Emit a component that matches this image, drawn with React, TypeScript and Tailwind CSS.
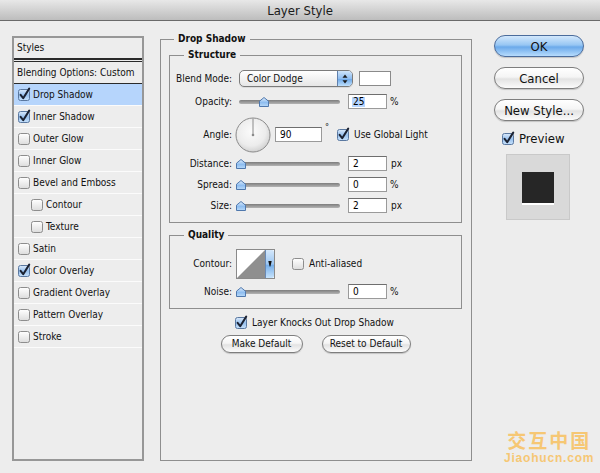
import React from "react";

const FONT = "'DejaVu Sans Condensed', 'Liberation Sans', sans-serif";

function Check({ checked }: { checked?: boolean }) {
  return (
    <svg width="13" height="13" viewBox="0 0 13 13" className="shrink-0 overflow-visible">
      <rect
        x="0.5"
        y="1.5"
        width="11"
        height="11"
        rx="2"
        fill={checked ? "url(#cbBlue)" : "url(#cbGray)"}
        stroke={checked ? "#5a78a0" : "#8d8d8d"}
      />
      {checked && (
        <path d="M2.6 6.8 L5.2 10.2 L11.2 0.6" stroke="#1b2232" strokeWidth="2" fill="none" strokeLinecap="round" strokeLinejoin="round" />
      )}
    </svg>
  );
}

function Thumb() {
  return (
    <svg width="10" height="10" viewBox="0 0 10 10">
      <path d="M5 0.5 L9.5 4.2 L9.5 9.5 L0.5 9.5 L0.5 4.2 Z" fill="url(#thumbG)" stroke="#4f78ad" strokeWidth="1" />
    </svg>
  );
}

function Slider({ mid }: { mid?: boolean }) {
  return (
    <div className="relative h-[10px] w-[101px] shrink-0">
      <div className="absolute left-0 right-0 top-[3px] h-[4px] rounded-full bg-gradient-to-b from-[#7d7d7d] to-[#b4b4b4]" />
      <div className={mid ? "absolute left-[20px] top-0 leading-none" : "absolute left-[-3px] top-0 leading-none"}>
        <Thumb />
      </div>
    </div>
  );
}

function Field({ value, wide, selected }: { value: string; wide?: boolean; selected?: boolean }) {
  return (
    <div
      className={
        (wide ? "w-[47px] " : "w-[39px] ") +
        "flex h-[15px] shrink-0 items-center border border-[#9a9a9a] border-t-[#6e6e6e] bg-white pl-[3px] text-[10px] leading-none text-black"
      }
    >
      <span className={selected ? "bg-[#b5d5ff] px-[1px]" : "px-[1px]"}>{value}</span>
    </div>
  );
}

function SliderRow({ label, value, unit, mid, selected }: { label: string; value: string; unit: string; mid?: boolean; selected?: boolean }) {
  return (
    <div className="flex h-[15px] items-center">
      <div className="mr-[7px] w-[62px] text-right">{label}</div>
      <Slider mid={mid} />
      <div className="ml-[8px]">
        <Field value={value} selected={selected} />
      </div>
      <div className={unit === "px" ? "ml-[4px]" : "ml-[3px]"}>{unit}</div>
    </div>
  );
}

function ListRow({ label, checked, active, indent }: { label: string; checked?: boolean; active?: boolean; indent?: boolean }) {
  return (
    <div
      className={
        (active ? "bg-[#b6d5fc] " : "") +
        "flex h-[22px] items-center border-b border-[#fbfbfb] " +
        (indent ? "pl-[17px]" : "pl-[4px]")
      }
    >
      <Check checked={checked} />
      <span className="ml-[2px]">{label}</span>
    </div>
  );
}

function AquaButton({ label, primary, className }: { label: string; primary?: boolean; className: string }) {
  return (
    <div
      className={
        className +
        " flex items-center justify-center rounded-full border shadow-[0_1px_1px_rgba(0,0,0,0.18)] " +
        (primary
          ? "border-[#4b6c9c] bg-[linear-gradient(to_bottom,#d3e8fc_0%,#97c6f3_45%,#6ba9ea_55%,#b7dcfd_100%)]"
          : "border-[#7e7e7e] bg-[linear-gradient(to_bottom,#ffffff_0%,#f5f5f5_45%,#e3e3e3_55%,#fbfbfb_100%)]")
      }
    >
      {label}
    </div>
  );
}

export default function App() {
  return (
    <div
      className="relative h-[473px] w-[600px] overflow-hidden bg-[#ededed] text-[10px] leading-none text-[#111]"
      style={{ fontFamily: FONT }}
    >
      <svg width="0" height="0" className="absolute">
        <defs>
          <linearGradient id="cbBlue" x1="0" y1="0" x2="0" y2="1">
            <stop offset="0" stopColor="#dbeafb" />
            <stop offset="0.5" stopColor="#98c1ee" />
            <stop offset="1" stopColor="#c7e1fb" />
          </linearGradient>
          <linearGradient id="cbGray" x1="0" y1="0" x2="0" y2="1">
            <stop offset="0" stopColor="#ffffff" />
            <stop offset="0.5" stopColor="#eeeeee" />
            <stop offset="1" stopColor="#dcdcdc" />
          </linearGradient>
          <linearGradient id="thumbG" x1="0" y1="0" x2="0" y2="1">
            <stop offset="0" stopColor="#e3effc" />
            <stop offset="0.55" stopColor="#8ebdf0" />
            <stop offset="1" stopColor="#b9daf9" />
          </linearGradient>
          <radialGradient id="dialG" cx="0.45" cy="0.4" r="0.6">
            <stop offset="0" stopColor="#fbfbfb" />
            <stop offset="0.7" stopColor="#ececec" />
            <stop offset="1" stopColor="#d2d2d2" />
          </radialGradient>
        </defs>
      </svg>

      {/* Title bar */}
      <div className="flex h-[21px] items-center justify-center border-b border-[#6a6a6a] bg-gradient-to-b from-[#e8e8e8] to-[#bdbdbd] text-[13px] text-[#1a1a1a]">
        Layer Style
      </div>

      {/* Body */}
      <div className="flex pl-[12px] pt-[14px]">
        {/* Left list */}
        <div className="mt-[1px] h-[425px] w-[132px] shrink-0 border-2 border-[#979797] bg-[#ededed]">
          <div className="flex h-[20px] items-center pl-[3px]">Styles</div>
          <div className="h-[2px] bg-[#2a2a2a]" />
          <div className="h-[1px]" />
          <div className="h-[1px] bg-[#2a2a2a]" />
          <div className="flex h-[22px] items-center border-b border-[#2a2a2a] pl-[3px]">Blending Options: Custom</div>
          <ListRow label="Drop Shadow" checked active />
          <ListRow label="Inner Shadow" checked />
          <ListRow label="Outer Glow" />
          <ListRow label="Inner Glow" />
          <ListRow label="Bevel and Emboss" />
          <ListRow label="Contour" indent />
          <ListRow label="Texture" indent />
          <ListRow label="Satin" />
          <ListRow label="Color Overlay" checked />
          <ListRow label="Gradient Overlay" />
          <ListRow label="Pattern Overlay" />
          <ListRow label="Stroke" />
        </div>

        {/* Middle: Drop Shadow group */}
        <div className="relative ml-[16px] mt-[4px] h-[422px] w-[312px] shrink-0 border border-[#8e8e8e] pl-[8px] pr-[9px]">
          <div className="absolute left-[13px] top-[-6px] bg-[#ededed] px-[4px] font-bold">Drop Shadow</div>

          {/* Structure */}
          <div className="relative mt-[15px] h-[168px] border border-[#8e8e8e] pt-[14px]">
            <div className="absolute left-[14px] top-[-6px] bg-[#ededed] px-[4px] font-bold">Structure</div>

            <div className="flex h-[17px] items-center">
              <div className="mr-[7px] w-[62px] text-right">Blend Mode:</div>
              <div className="flex h-[17px] w-[114px] shrink-0 overflow-hidden rounded-[5px] border border-[#7b7b7b] bg-gradient-to-b from-white to-[#e6e6e6] shadow-[0_1px_0_rgba(0,0,0,0.08)]">
                <div className="flex flex-1 items-center pl-[7px]">Color Dodge</div>
                <div className="flex w-[15px] items-center justify-center border-l border-[#5f80ad] bg-[linear-gradient(to_bottom,#cfe4f9_0%,#8fbdf0_50%,#6fa9e8_55%,#bfe0fc_100%)]">
                  <svg width="6" height="10" viewBox="0 0 6 10">
                    <path d="M3 0.5 L5.5 3.8 L0.5 3.8 Z" fill="#1a1a1a" />
                    <path d="M0.5 6.2 L5.5 6.2 L3 9.5 Z" fill="#1a1a1a" />
                  </svg>
                </div>
              </div>
              <div className="ml-[6px] h-[15px] w-[32px] border border-[#8a8a8a] bg-white" />
            </div>

            <div className="mt-[7px]">
              <SliderRow label="Opacity:" value="25" unit="%" mid selected />
            </div>

            <div className="mt-[8px] flex h-[35px] items-center">
              <div className="mr-[3px] w-[62px] text-right">Angle:</div>
              <svg width="36" height="36" viewBox="0 0 36 36" className="shrink-0">
                <circle cx="18" cy="18" r="17" fill="url(#dialG)" stroke="#8b8b8b" />
                <line x1="18" y1="18" x2="18" y2="1.5" stroke="#8a8a8a" strokeWidth="1" />
                <circle cx="18" cy="18" r="1.3" fill="#8a8a8a" />
              </svg>
              <div className="ml-[4px]">
                <Field value="90" wide />
              </div>
              <div className="ml-[3px] self-start pt-[6px] text-[9px]">°</div>
              <div className="ml-[8px] flex items-center">
                <Check checked />
                <span className="ml-[4px]">Use Global Light</span>
              </div>
            </div>

            <div className="mt-[4px]">
              <SliderRow label="Distance:" value="2" unit="px" />
            </div>
            <div className="mt-[6px]">
              <SliderRow label="Spread:" value="0" unit="%" />
            </div>
            <div className="mt-[6px]">
              <SliderRow label="Size:" value="2" unit="px" />
            </div>
          </div>

          {/* Quality */}
          <div className="relative mt-[12px] h-[74px] border border-[#8e8e8e] pt-[13px]">
            <div className="absolute left-[14px] top-[-6px] bg-[#ededed] px-[4px] font-bold">Quality</div>
            <div className="flex h-[29px] items-center">
              <div className="mr-[4px] w-[62px] text-right">Contour:</div>
              <div className="flex h-[30px] w-[39px] shrink-0 border border-[#8a8a8a] bg-white">
                <svg width="28" height="28" viewBox="0 0 28 28" className="shrink-0">
                  <rect width="28" height="28" fill="#ffffff" />
                  <polygon points="0,28 28,0 28,28" fill="#8f8f8f" />
                </svg>
                <div className="flex w-[9px] items-center justify-center rounded-r-[2px] border-l border-[#6a8ab5] bg-[linear-gradient(to_bottom,#d5e8fb_0%,#9dc7f2_50%,#78b0ea_55%,#c7e3fc_100%)]">
                  <svg width="4" height="8" viewBox="0 0 4 8">
                    <path d="M0.3 1 L3.7 1 L2.4 6.5 L1.6 6.5 Z" fill="#111" />
                  </svg>
                </div>
              </div>
              <div className="ml-[17px] flex items-center">
                <Check />
                <span className="ml-[4px]">Anti-aliased</span>
              </div>
            </div>
            <div className="mt-[6px]">
              <SliderRow label="Noise:" value="0" unit="%" />
            </div>
          </div>

          <div className="mt-[7px] flex items-center justify-center pr-[2px]">
            <Check checked />
            <span className="ml-[4px]">Layer Knocks Out Drop Shadow</span>
          </div>

          <div className="mt-[6px] flex justify-center gap-[19px]">
            <AquaButton label="Make Default" className="h-[18px] w-[82px]" />
            <AquaButton label="Reset to Default" className="h-[18px] w-[89px]" />
          </div>
        </div>

        {/* Right column */}
        <div className="ml-[22px] flex w-[90px] shrink-0 flex-col text-[13px]">
          <AquaButton label="OK" primary className="h-[22px] w-[90px]" />
          <AquaButton label="Cancel" className="mt-[10px] h-[22px] w-[90px]" />
          <AquaButton label="New Style..." className="mt-[10px] h-[22px] w-[90px]" />
          <div className="ml-[8px] mt-[11px] flex h-[13px] items-center">
            <Check checked />
            <span className="ml-[4px]">Preview</span>
          </div>
          <div className="ml-[12px] mt-[9px] flex h-[66px] w-[64px] justify-center border border-[#c9c9c9] bg-[#d9d9d9] pt-[17px]">
            <div className="h-[33px] w-[32px] border-b-2 border-white bg-[#262626]" />
          </div>
        </div>
      </div>

      {/* Watermark */}
      <div className="absolute left-[504px] top-[430px] flex flex-col items-center text-[#f6c774]">
        <div
          className="h-[19px] text-[19px] font-bold leading-[19px] tracking-[2px]"
          style={{ fontFamily: "'Noto Sans CJK SC', 'Noto Sans', sans-serif" }}
        >
          交互中国
        </div>
        <div
          className="mt-[4px] h-[11px] text-[12px] font-semibold leading-[11px] tracking-[0.8px]"
          style={{ fontFamily: "'Liberation Sans', sans-serif" }}
        >
          Jiaohucn.com
        </div>
      </div>
    </div>
  );
}
